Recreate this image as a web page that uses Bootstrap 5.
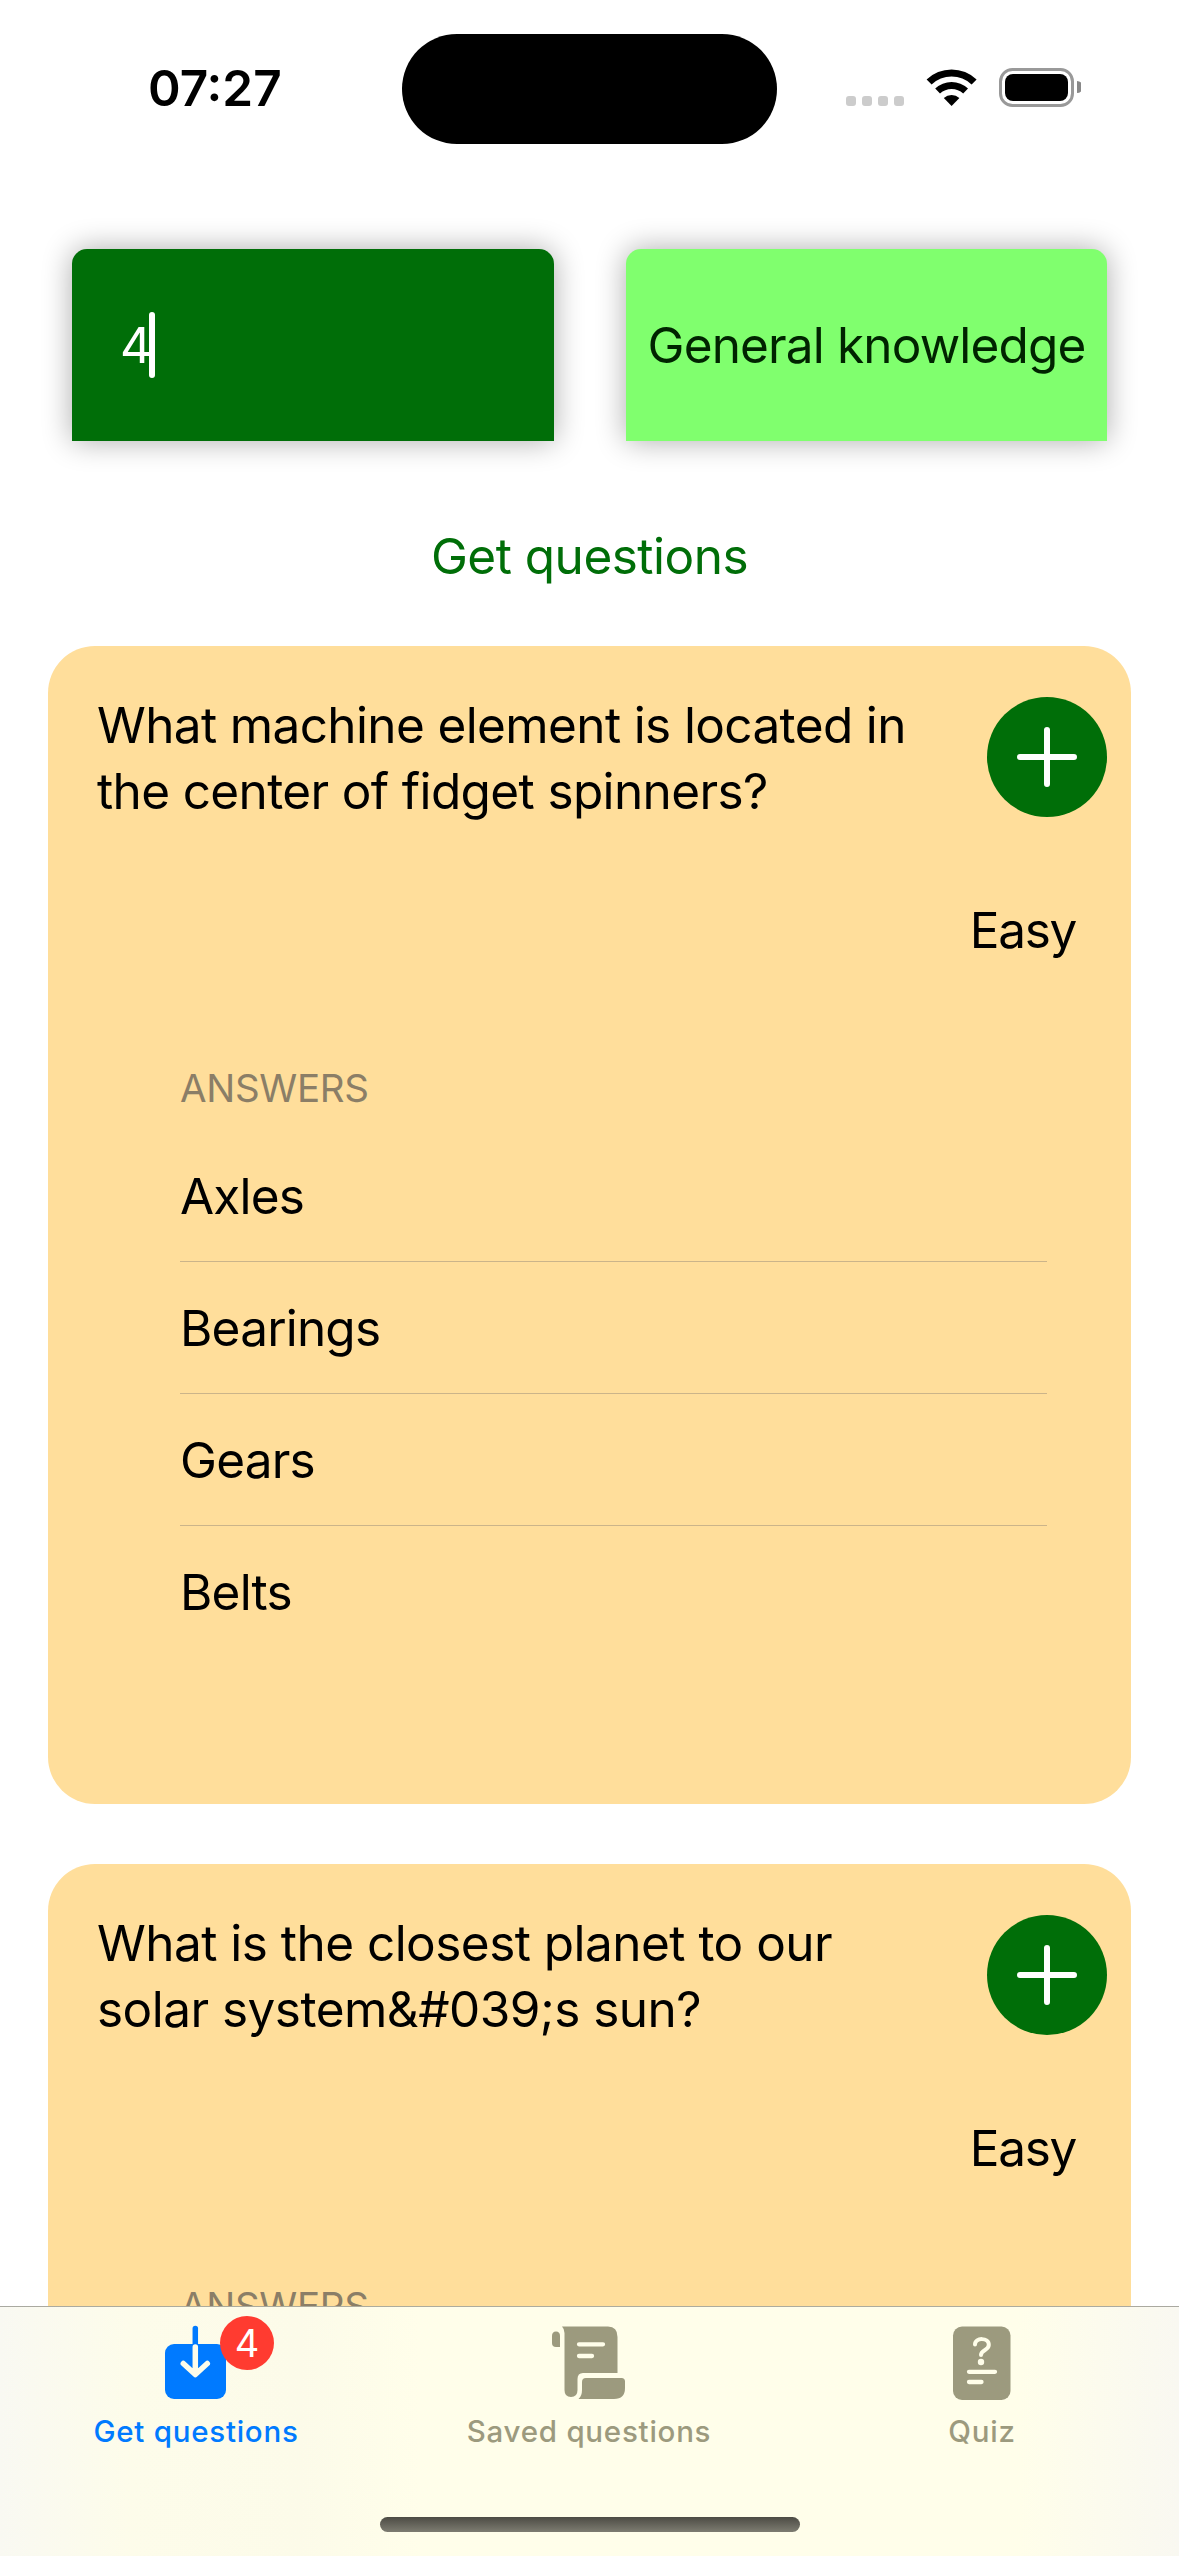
<!DOCTYPE html>
<html lang="en">
<head>
<meta charset="utf-8">
<meta name="viewport" content="width=device-width, initial-scale=1">
<title>Quiz</title>
<link href="https://cdn.jsdelivr.net/npm/bootstrap@5.3.0/dist/css/bootstrap.min.css" rel="stylesheet">
<style>
  body { font-family: Inter, "Liberation Sans", sans-serif; font-size: 49.5px; line-height: 66px; letter-spacing: -.63px; color: #000; background: #fff; }
  .screen { width: 1179px; height: 2556px; }
  .status-bar { height: 249px; padding: 34px 98px 0 148px; }
  .status-bar .clock { width: 254px; font-weight: 600; font-size: 49.5px; line-height: 108px; letter-spacing: 0; }
  .island { width: 375px; height: 110px; border-radius: 55px; background: #000; }
  .fields { padding: 0 72px; gap: 72px; }
  .field { height: 192px; border-radius: 15px 15px 0 0; box-shadow: 0 0 30px rgba(0,0,0,.33); }
  .amount { width: 482px; background: #006e08; color: #fff; padding-left: 48px; }
  .caret { width: 6px; height: 66px; border-radius: 3px; background: #fff; margin-left: -2px; }
  .category { background: #80ff6e; color: #002400; letter-spacing: -.85px; }
  .fetch { height: 205px; padding-top: 82px; letter-spacing: -.5px; }
  .fetch .btn { font-size: inherit; line-height: 66px; color: #006e08; letter-spacing: inherit; }
  .question { margin: 0 48px 60px; height: 1158px; border-radius: 47px; background: #ffde9b; }
  .question-head { padding: 46px 24px 0 49px; height: 251px; }
  .question + .question .question-head { letter-spacing: -.53px; }
  .add-btn { width: 120px; height: 120px; background: #006e08; margin-top: 5px; }
  .level { padding-right: 55px; letter-spacing: -1.3px; }
  .answers { padding: 0 84px 0 132px; }
  .answers-title { font-size: 38.5px; line-height: 48px; color: #8b7e67; letter-spacing: -.3px; padding-top: 101px; height: 167px; }
  .answers .list-group-item { height: 132px; padding: 33px 0 32px; line-height: 66px; background: none; color: #000; letter-spacing: -.8px; border-color: #cbb48a; border-width: 0 0 1px; }
  .answers .list-group-item:last-child { border: 0; }
  .tabs { height: 250px; border-top: 1px solid rgba(60,60,50,.42); background: linear-gradient(90deg, #f9f9f2 0, #fdfcea 130px, #fcfbe9 300px, #fffeea 420px, #fffeea 1020px, #f9f8f1 1179px); font-size: 29.5px; line-height: 36px; font-weight: 500; letter-spacing: .75px; color: #9c9a7e; }
  .tabs .nav-link { color: inherit; padding: 17px 1px 0 0; }
  .tabs .nav-link.active { color: #007aff; }
  .tab-icon { height: 89px; }
  .count-badge { left: 220px; top: 9px; width: 54px; height: 54px; background: #ff3b30; font-size: 38px; line-height: 54px; font-weight: 400; padding: 0; letter-spacing: 0; }
  .home-bar { width: 420px; height: 15px; border-radius: 8px; background: linear-gradient(#4c4b44, #7d7c71); bottom: 24px; left: 380px; }
</style>
<script src="https://cdn.jsdelivr.net/npm/bootstrap@5.3.0/dist/js/bootstrap.bundle.min.js"></script>
</head>
<body>
<div class="screen position-relative overflow-hidden">
  <header class="status-bar d-flex align-items-start">
    <span class="clock">07:27</span>
    <div class="island flex-shrink-0"></div>
    <svg class="ms-auto" width="236" height="110" viewBox="845 34 236 110">
      <g fill="#ccc"><rect x="846" y="96" width="10" height="10" rx="3"/><rect x="862" y="96" width="10" height="10" rx="3"/><rect x="878" y="96" width="10" height="10" rx="3"/><rect x="894" y="96" width="10" height="10" rx="3"/></g>
      <path d="M926.6 79.500 A36 36 0 0 1 976.600 79.500 L971.600 84.500 A29 29 0 0 0 931.600 84.500Z"/>
      <path d="M935.200 88.500 A24 24 0 0 1 968 88.500 L963.200 93.500 A17 17 0 0 0 940 93.500Z"/>
      <path d="M943.800 98 A12 12 0 0 1 959.400 98 L951.600 106Z"/>
      <rect x="1000.500" y="69.500" width="72" height="36" rx="12" fill="none" stroke="#999" stroke-width="3"/>
      <rect x="1005" y="74" width="63" height="27" rx="8"/>
      <path d="M1077 81a6 6 0 0 1 0 12z" fill="#888"/>
    </svg>
  </header>

  <section class="fields d-flex">
    <div class="field amount d-flex align-items-center"><span>4</span><span class="caret"></span></div>
    <div class="field category d-flex align-items-center justify-content-center flex-fill text-nowrap">General knowledge</div>
  </section>
  <div class="fetch"><button class="btn d-block mx-auto p-0 border-0">Get questions</button></div>

  <article class="card border-0 question">
    <div class="question-head d-flex justify-content-between">
      <div>What machine element is located in<br>the center of fidget spinners?</div>
      <button class="btn add-btn d-flex align-items-center justify-content-center rounded-circle p-0 border-0" aria-label="Add"><svg width="60" height="60" viewBox="0 0 60 60" stroke="#fff" stroke-width="6" stroke-linecap="round"><path d="M30 3V57M3 30H57"/></svg></button>
    </div>
    <div class="level text-end">Easy</div>
    <div class="answers">
      <div class="answers-title">ANSWERS</div>
      <ul class="list-group list-group-flush">
        <li class="list-group-item">Axles</li>
        <li class="list-group-item">Bearings</li>
        <li class="list-group-item">Gears</li>
        <li class="list-group-item">Belts</li>
      </ul>
    </div>
  </article>

  <article class="card border-0 question">
    <div class="question-head d-flex justify-content-between">
      <div>What is the closest planet to our<br>solar system&amp;#039;s sun?</div>
      <button class="btn add-btn d-flex align-items-center justify-content-center rounded-circle p-0 border-0" aria-label="Add"><svg width="60" height="60" viewBox="0 0 60 60" stroke="#fff" stroke-width="6" stroke-linecap="round"><path d="M30 3V57M3 30H57"/></svg></button>
    </div>
    <div class="level text-end">Easy</div>
    <div class="answers"><div class="answers-title">ANSWERS</div></div>
  </article>

  <nav class="tabs nav nav-fill flex-nowrap align-items-start position-absolute bottom-0 start-0 w-100">
    <a class="nav-link active position-relative w-100"><div class="tab-icon"><svg width="74" height="80" viewBox="159 2324 74 80"><rect x="165" y="2344" width="61" height="55" rx="9" fill="#007aff"/><path d="M195.300 2328.500V2346" stroke="#007aff" stroke-width="5.500" stroke-linecap="round"/><path d="M195.300 2347V2373M183.300 2363.500L195.300 2374.500L207.300 2363.500" fill="none" stroke="#fdfcea" stroke-width="5.500" stroke-linecap="round" stroke-linejoin="round"/></svg></div>Get questions<span class="badge rounded-circle position-absolute count-badge">4</span></a>
    <a class="nav-link w-100"><div class="tab-icon"><svg width="74" height="80" viewBox="552 2324 74 80" fill="#9c9a7e"><path d="M560 2347h-4q-4 0-4-4v-7q0-4.500 4-4.500t4 4.500z"/><path d="M562 2326.500H608Q617.500 2326.500 617.500 2337V2373H583Q577.500 2373 577.500 2379V2390Q577.500 2397 571 2397Q564.500 2397 564.500 2390V2333Q564.500 2329 562 2326.500Z"/><path d="M586 2378H621.500Q625 2378 625 2381.500V2388Q625 2399 614 2399H578.500Q582 2396 582 2390V2382Q582 2378 586 2378Z"/><path d="M579 2344.300H603M579 2356H592" stroke="#fffeea" stroke-width="4.300" stroke-linecap="round"/></svg></div>Saved questions</a>
    <a class="nav-link w-100"><div class="tab-icon"><svg width="74" height="80" viewBox="945 2324 74 80"><rect x="953" y="2326.500" width="57.500" height="73.500" rx="9" fill="#9c9a7e"/><g fill="none" stroke="#fffeea" stroke-linecap="round"><path d="M975 2344.500C975 2337 989 2337.500 988.800 2345C988.600 2350.500 981 2350 981 2355" stroke-width="4"/><path d="M969 2371.800H995M969 2382H981.500" stroke-width="4.300"/></g><circle cx="981" cy="2362" r="3.200" fill="#fffeea"/></svg></div>Quiz</a>
  </nav>
  <div class="home-bar position-absolute"></div>
</div>
</body>
</html>
